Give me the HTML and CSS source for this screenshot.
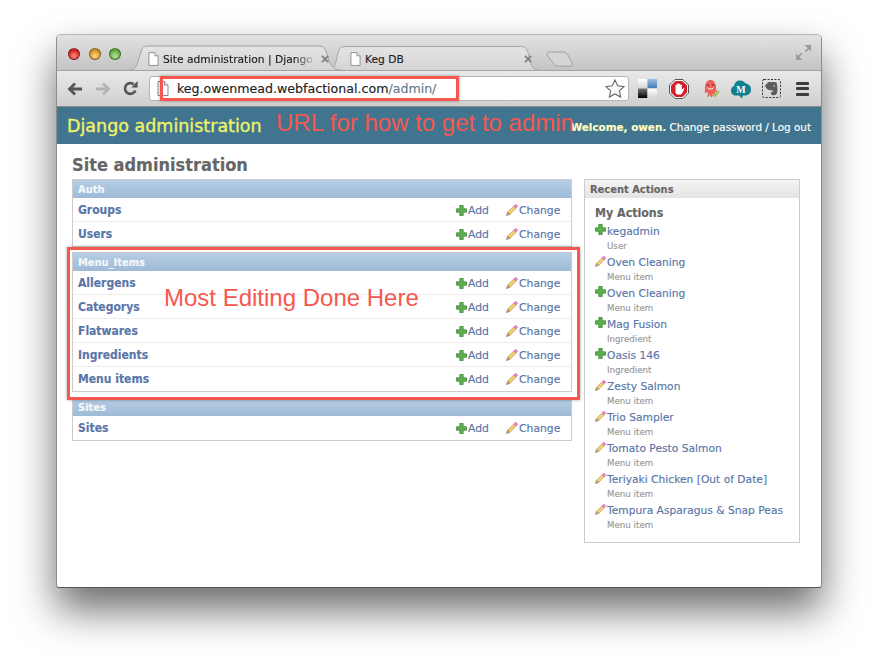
FILE: index.html
```html
<!DOCTYPE html>
<html lang="en">
<head>
<meta charset="utf-8">
<title>Site administration | Django site admin</title>
<link rel="stylesheet" href="styles.css">
</head>
<body>
<svg class="defs" width="0" height="0" aria-hidden="true">
  <symbol id="plus" viewBox="0 0 11 11">
    <path d="M3.800.5h3.400v3.300h3.300v3.400H7.200v3.300H3.800V7.200H.5V3.800h3.300z" fill="#5fae4f" stroke="#3c8a35" stroke-width=".8"/>
  </symbol>
  <symbol id="pencil" viewBox="0 0 12 12">
    <path d="M.6 11.400l1-3.100 2.100 2.100z" fill="#f2dcb0" stroke="#5b3f1a" stroke-width=".6"/>
    <path d="M1.800 8 7.600 2.200l2.200 2.200L4 10.200z" fill="#f3d272" stroke="#a9812f" stroke-width=".6"/>
    <path d="M7.700 2 9.300.4c.3-.2.600-.2.800 0l1.500 1.500c.2.200.2.500 0 .800L10 4.300z" fill="#ee7fd0" stroke="#cf62b2" stroke-width=".5"/>
  </symbol>
  <symbol id="page" viewBox="0 0 12 15">
    <path d="M1 .5h6.500L11 4v10.500H1z" fill="#fff" stroke="#8a8a8a"/>
    <path d="M7.500.5V4H11" fill="#eee" stroke="#8a8a8a"/>
  </symbol>
</svg>

<div class="window">
  <div class="tabstrip">
    <svg class="tabshapes" width="766" height="37" viewBox="0 0 766 37" aria-hidden="true">
      <defs>
        <linearGradient id="tabbg" x1="0" y1="0" x2="0" y2="1"><stop offset="0" stop-color="#e4e4e4"/><stop offset="1" stop-color="#d4d4d4"/></linearGradient>
      </defs>
      <path d="M491 19.500q0-1.500 2-1.500h14q3 0 5 3l4 8q1 3-1 3h-14q-2 0-3-2l-7-9z" fill="#d6d6d6" stroke="#a0a0a0"/>
      <path d="M272 36.500c5 0 6-3 8-9l2-9c1-4 3-6 8-6h174c5 0 7 2 8 6l3 11c1 5 4 7 14 7z" fill="url(#tabbg)" stroke="#a6a6a6"/>
      <path d="M71 36.500c7 0 9-3 11-9l3-10c1-4 3-5.500 8-5.500h170c4 0 6 2 7 5l3 10c3 7 6 9.500 16 9.500z" fill="url(#tabbg)" stroke="#a2a2a2"/>
    </svg>
    <div class="lights">
      <span class="light light-red"></span>
      <span class="light light-amber"></span>
      <span class="light light-green"></span>
    </div>
    <div class="tab tab-active">
      <svg class="tab-icon"><use href="#page"/></svg>
      <span class="tab-title">Site administration | Django</span>
      <span class="tab-close">×</span>
    </div>
    <div class="tab tab-second">
      <svg class="tab-icon"><use href="#page"/></svg>
      <span class="tab-title">Keg DB</span>
      <span class="tab-close">×</span>
    </div>
    <svg class="fullscreen" width="15" height="15" viewBox="0 0 15 15" aria-hidden="true">
      <path d="M8.500 0H15v6.500l-2.200-2.200-3 3-1.100-1.100 3-3zM6.500 15H0V8.500l2.200 2.200 3-3 1.100 1.100-3 3z" fill="#9a9a9a"/>
    </svg>
  </div>

  <div class="toolbar">
    <svg class="nav-icon" width="16" height="14" viewBox="0 0 16 14" aria-hidden="true">
      <path d="M15 7H3M8 1.500 2.500 7 8 12.500" fill="none" stroke="#555" stroke-width="2.800"/>
    </svg>
    <svg class="nav-icon" width="16" height="14" viewBox="0 0 16 14" aria-hidden="true">
      <path d="M1 7h12M8 1.500 13.500 7 8 12.500" fill="none" stroke="#b4b4b4" stroke-width="2.800"/>
    </svg>
    <svg class="nav-icon" width="15" height="15" viewBox="0 0 15 15" aria-hidden="true">
      <path d="M12.400 9.500A5.400 5.400 0 1 1 10.800 3.300" fill="none" stroke="#555" stroke-width="2.600"/>
      <path d="M8.300 6.400h6.300V0z" fill="#555"/>
    </svg>
    <div class="omnibox">
      <svg class="omni-page"><use href="#page"/></svg>
      <span class="url"><span class="url-host">keg.owenmead.webfactional.com</span><span class="url-path">/admin/</span></span>
      <svg class="star" width="20" height="19" viewBox="0 0 20 19" aria-hidden="true">
        <path d="M10 1l2.700 5.800 6.300.8-4.600 4.300 1.200 6.200L10 15l-5.600 3.100 1.200-6.200L1 7.600l6.300-.8z" fill="#fbfbfb" stroke="#666" stroke-width="1.100"/>
      </svg>
    </div>
    <div class="extensions">
      <svg class="ext ext-delicious" width="19" height="19" viewBox="0 0 19 19" aria-hidden="true">
        <defs>
          <linearGradient id="dlk" x1="0" y1="0" x2="0" y2="1"><stop offset="0" stop-color="#777"/><stop offset="1" stop-color="#000"/></linearGradient>
          <linearGradient id="dlb" x1="0" y1="0" x2="0" y2="1"><stop offset="0" stop-color="#9cc0e4"/><stop offset="1" stop-color="#3c78b8"/></linearGradient>
          <linearGradient id="dlw" x1="0" y1="0" x2="0" y2="1"><stop offset="0" stop-color="#fff"/><stop offset="1" stop-color="#d4d4d4"/></linearGradient>
        </defs>
        <rect width="9.500" height="9.500" fill="url(#dlw)"/>
        <rect x="9.500" width="9.500" height="9.500" fill="url(#dlb)"/>
        <rect y="9.500" width="9.500" height="9.500" fill="url(#dlk)"/>
        <rect x="9.500" y="9.500" width="9.500" height="9.500" fill="url(#dlw)"/>
      </svg>
      <svg class="ext ext-adblock" width="20" height="20" viewBox="0 0 20 20" aria-hidden="true">
        <path d="M6 .500h8L19.500 6v8L14 19.500H6L.500 14V6z" fill="#fff" stroke="#555"/>
        <path d="M6.600 2h6.800L18 6.600v6.800L13.400 18H6.600L2 13.400V6.600z" fill="#d3202a"/>
        <path d="M6.500 9V6.300a.8.8 0 0 1 1.600 0V5a.8.8 0 0 1 1.600 0v.6a.8.800 0 0 1 1.600 0v.8a.8.8 0 0 1 1.600 0V11l1-1.400c.7-.8 1.700 0 1.200.8L13 14.500c-.4.700-1 1-2 1H9c-1.700 0-2.500-1-2.500-2.500z" fill="#fff"/>
      </svg>
      <svg class="ext ext-octopus" width="19" height="20" viewBox="0 0 19 20" aria-hidden="true">
        <path d="M3 8.500C3 3.500 5.500 1 8.500 1S14 3.500 14 8.500c0 2 .5 3.500 1.500 4.500-1 .5-2 0-2.500-.5 0 2 .5 3.500 1 5-1.500 0-2.500-1-3-2.500-.2 1.500-.7 3-1.500 3.500C8.500 18 8 16.500 8 15c-.5 1.500-1.500 3-3 3 .5-1.500 1-3 .7-5-.7.700-2 1-3.200.3C3 12 3 10.500 3 8.500z" fill="#e8625f"/>
        <path d="M5.500 8.500c1 2 5 2 6 0" fill="none" stroke="#fff" stroke-width="1"/>
        <circle cx="6" cy="6" r=".9" fill="#8b2b2b"/><circle cx="11" cy="6" r=".9" fill="#8b2b2b"/>
        <path d="M11 14.500l2 2.500 4-5" fill="none" stroke="#9cc24a" stroke-width="2"/>
      </svg>
      <svg class="ext ext-cloud" width="20" height="20" viewBox="0 0 20 20" aria-hidden="true">
        <path d="M5 16.500C2 16.500 0 14.500 0 11.500 0 9 1.500 7.500 3 7 3.500 3.500 6 1.500 9 1.500c2.500 0 4.500 1 5.500 3 3 0 5.500 2.500 5.500 6 0 3.500-2.500 6-6 6h-2l-1 3-3-3z" fill="#14808f"/>
        <text x="10" y="13.500" class="cloud-letter" text-anchor="middle">M</text>
      </svg>
      <svg class="ext ext-evernote" width="19" height="19" viewBox="0 0 19 19" aria-hidden="true">
        <rect x=".5" y=".5" width="18" height="18" rx="1.500" fill="none" stroke="#333" stroke-dasharray="2 1.500"/>
        <path d="M3 6.500 6.500 3h6c1.500 0 2.300.7 2.500 2.200.5 3 .6 6 .2 8-.4 2-1.700 3-3.600 3-1.500 0-2.600-.6-2.600-2s1.300-2 2.600-1.600c-.3-.9-1.300-1.400-2.900-1.400C5.600 11.200 4 9.600 3 6.500z" fill="#5c5c5c"/>
        <circle cx="12.200" cy="7" r=".8" fill="#ddd"/>
      </svg>
      <span class="hamburger"><span></span><span></span><span></span></span>
    </div>
  </div>

  <div class="page">
    <header class="site-header">
      <div class="branding">Django administration</div>
      <div class="user-tools"><span class="welcome">Welcome, <strong>owen.</strong></span> <a href="#">Change password</a> / <a href="#">Log out</a></div>
    </header>

    <main class="content">
      <h1 class="page-title">Site administration</h1>
      <div class="columns">
        <div class="modules">
          <section class="module">
            <h2 class="caption">Auth</h2>
            <div class="row"><a class="row-name" href="#">Groups</a><a class="row-link" href="#"><svg class="ico"><use href="#plus"/></svg>Add</a><a class="row-link" href="#"><svg class="ico ico-pencil"><use href="#pencil"/></svg>Change</a></div>
            <div class="row"><a class="row-name" href="#">Users</a><a class="row-link" href="#"><svg class="ico"><use href="#plus"/></svg>Add</a><a class="row-link" href="#"><svg class="ico ico-pencil"><use href="#pencil"/></svg>Change</a></div>
          </section>
          <section class="module">
            <h2 class="caption">Menu_Items</h2>
            <div class="row"><a class="row-name" href="#">Allergens</a><a class="row-link" href="#"><svg class="ico"><use href="#plus"/></svg>Add</a><a class="row-link" href="#"><svg class="ico ico-pencil"><use href="#pencil"/></svg>Change</a></div>
            <div class="row"><a class="row-name" href="#">Categorys</a><a class="row-link" href="#"><svg class="ico"><use href="#plus"/></svg>Add</a><a class="row-link" href="#"><svg class="ico ico-pencil"><use href="#pencil"/></svg>Change</a></div>
            <div class="row"><a class="row-name" href="#">Flatwares</a><a class="row-link" href="#"><svg class="ico"><use href="#plus"/></svg>Add</a><a class="row-link" href="#"><svg class="ico ico-pencil"><use href="#pencil"/></svg>Change</a></div>
            <div class="row"><a class="row-name" href="#">Ingredients</a><a class="row-link" href="#"><svg class="ico"><use href="#plus"/></svg>Add</a><a class="row-link" href="#"><svg class="ico ico-pencil"><use href="#pencil"/></svg>Change</a></div>
            <div class="row"><a class="row-name" href="#">Menu items</a><a class="row-link" href="#"><svg class="ico"><use href="#plus"/></svg>Add</a><a class="row-link" href="#"><svg class="ico ico-pencil"><use href="#pencil"/></svg>Change</a></div>
          </section>
          <section class="module">
            <h2 class="caption">Sites</h2>
            <div class="row"><a class="row-name" href="#">Sites</a><a class="row-link" href="#"><svg class="ico"><use href="#plus"/></svg>Add</a><a class="row-link" href="#"><svg class="ico ico-pencil"><use href="#pencil"/></svg>Change</a></div>
          </section>
        </div>

        <aside class="recent">
          <h2 class="recent-caption">Recent Actions</h2>
          <h3 class="recent-title">My Actions</h3>
          <ul class="actions">
            <li class="action"><svg class="ico"><use href="#plus"/></svg><a href="#">kegadmin</a><span class="action-type">User</span></li>
            <li class="action"><svg class="ico ico-pencil"><use href="#pencil"/></svg><a href="#">Oven Cleaning</a><span class="action-type">Menu item</span></li>
            <li class="action"><svg class="ico"><use href="#plus"/></svg><a href="#">Oven Cleaning</a><span class="action-type">Menu item</span></li>
            <li class="action"><svg class="ico"><use href="#plus"/></svg><a href="#">Mag Fusion</a><span class="action-type">Ingredient</span></li>
            <li class="action"><svg class="ico"><use href="#plus"/></svg><a href="#">Oasis 146</a><span class="action-type">Ingredient</span></li>
            <li class="action"><svg class="ico ico-pencil"><use href="#pencil"/></svg><a href="#">Zesty Salmon</a><span class="action-type">Menu item</span></li>
            <li class="action"><svg class="ico ico-pencil"><use href="#pencil"/></svg><a href="#">Trio Sampler</a><span class="action-type">Menu item</span></li>
            <li class="action"><svg class="ico ico-pencil"><use href="#pencil"/></svg><a href="#">Tomato Pesto Salmon</a><span class="action-type">Menu item</span></li>
            <li class="action"><svg class="ico ico-pencil"><use href="#pencil"/></svg><a href="#">Teriyaki Chicken [Out of Date]</a><span class="action-type">Menu item</span></li>
            <li class="action"><svg class="ico ico-pencil"><use href="#pencil"/></svg><a href="#">Tempura Asparagus &amp; Snap Peas</a><span class="action-type">Menu item</span></li>
          </ul>
        </aside>
      </div>
    </main>
  </div>

  <div class="callout callout-url"></div>
  <div class="callout callout-menu"></div>
  <div class="note note-url">URL for how to get to admin</div>
  <div class="note note-menu">Most Editing Done Here</div>
</div>
</body>
</html>
```
FILE: styles.css
```css
* { box-sizing: border-box; }
html, body { margin: 0; height: 100%; }
body {
  background: #fff;
  padding: 34px 56px 0;
  font-family: "DejaVu Sans", Verdana, sans-serif;
  overflow: hidden;
  -webkit-text-stroke: .15px;
}
.defs { position: absolute; }
a { color: #5a76a8; text-decoration: none; }

.window {
  position: relative;
  width: 766px;
  height: 554px;
  background: #fff;
  border: 1px solid #8c8c8c;
  border-top-color: #b4b4b4;
  border-bottom-color: #555;
  border-radius: 5px 5px 3px 3px;
  box-shadow: 0 22px 40px rgba(0, 0, 0, .58);
  display: flex;
  flex-direction: column;
  overflow: hidden;
}

/* browser chrome */
.tabstrip {
  position: relative;
  height: 36px;
  flex: none;
  background: linear-gradient(#e2e2e2, #c4c4c4);
  border-bottom: 1px solid #a2a2a2;
  display: flex;
  align-items: flex-start;
}
.tabshapes { position: absolute; left: -1px; top: -1px; }
.lights { position: relative; display: flex; gap: 8.500px; padding: 13px 0 0 11px; width: 91px; flex: none; }
.light { width: 12px; height: 12px; border-radius: 50%; border: 1px solid rgba(0, 0, 0, .4); }
.light-red { background: radial-gradient(circle at 50% 70%, #ff8d85, #c8221f 70%); }
.light-amber { background: radial-gradient(circle at 50% 70%, #ffd889, #cf8c22 70%); }
.light-green { background: radial-gradient(circle at 50% 70%, #b5e79a, #5da33c 70%); }
.tab {
  position: relative;
  display: flex;
  align-items: center;
  height: 24px;
  margin-top: 12px;
  font-size: 10.700px;
  color: #222;
  flex: none;
}
.tab-active { width: 185px; }
.tab-second { width: 186px; margin-left: 17px; }
.tab-icon { width: 11px; height: 14px; flex: none; margin-right: 4px; }
.tab-title {
  flex: 1;
  white-space: nowrap;
}
.tab-active .tab-title {
  -webkit-mask-image: linear-gradient(to right, #000 85%, transparent 100%);
  mask-image: linear-gradient(to right, #000 85%, transparent 100%);
}
.tab-close { width: 16px; text-align: center; font-size: 12px; font-weight: bold; color: #7d7d7d; flex: none; }
.fullscreen { position: absolute; right: 10px; top: 10px; }

.toolbar {
  height: 36px;
  flex: none;
  background: linear-gradient(#e9e9e9, #cfcfcf);
  border-bottom: 1px solid #8d8d8d;
  display: flex;
  align-items: center;
  padding-left: 10px;
}
.nav-icon { flex: none; margin-right: 12px; }
.omnibox {
  width: 480px;
  height: 25px;
  margin-left: -1px;
  background: #fff;
  border: 1px solid #b4b4b4;
  border-radius: 3px;
  display: flex;
  align-items: center;
  padding-left: 7px;
  flex: none;
}
.omni-page { width: 12px; height: 15px; flex: none; margin-right: 8px; }
.url { flex: 1; font-size: 12.600px; white-space: nowrap; }
.url-host { color: #1c1c1c; }
.url-path { color: #66788a; }
.star { flex: none; margin-right: 3px; }
.extensions { display: flex; align-items: center; padding-left: 9px; flex: 1; }
.ext { flex: none; }
.ext-delicious { margin-right: 12px; }
.ext-adblock { margin-right: 13px; }
.ext-octopus { margin-right: 10px; }
.ext-cloud { margin-right: 11px; }
.ext-evernote { margin-right: 15px; }
.cloud-letter { font: bold 10px "Liberation Serif", serif; fill: #fff; }
.hamburger { display: flex; flex-direction: column; gap: 2.500px; width: 13px; }
.hamburger span { height: 3px; background: #3c3c3c; border-radius: 1px; }

/* django admin */
.page { flex: 1; display: flex; flex-direction: column; min-height: 0; }
.site-header {
  height: 37px;
  flex: none;
  background: #41758f;
  display: flex;
  align-items: center;
  justify-content: space-between;
  padding: 0 10px;
}
.branding { font-size: 17.500px; color: #eef26c; white-space: nowrap; -webkit-text-stroke: .35px; }
.user-tools { font-size: 10.400px; color: #fff; white-space: nowrap; padding-top: 3px; }
.user-tools a { color: #fff; }
.welcome { color: #ffffc8; font-weight: bold; }

.content { padding: 9px 21px 0 15px; }
.page-title { margin: 0 0 1px; font-family: "DejaVu Sans Condensed", "DejaVu Sans", sans-serif; font-size: 18px; line-height: 24px; font-weight: bold; color: #666; }
.columns { display: flex; align-items: flex-start; justify-content: space-between; }
.modules { width: 500px; display: flex; flex-direction: column; gap: 5px; margin-top: 1px; }
.module { border: 1px solid #ccc; }
.caption {
  margin: 0;
  height: 18px;
  padding: 1px 0 0 5px;
  font-family: "DejaVu Sans Condensed", "DejaVu Sans", sans-serif;
  font-size: 11px;
  line-height: 17px;
  font-weight: bold;
  color: #f4f7fb;
  background: linear-gradient(#b6cee5, #9ebad6);
}
.row {
  height: 24px;
  display: grid;
  grid-template-columns: 1fr 50px 65px;
  align-items: center;
  font-size: 10.800px;
  box-shadow: inset 0 -1px #eee;
}
.row:last-child { box-shadow: none; }
.row-name { padding-left: 5px; font-family: "DejaVu Sans Condensed", "DejaVu Sans", sans-serif; font-size: 12px; font-weight: bold; }
.row-link { display: flex; align-items: center; white-space: nowrap; }
.ico { width: 11px; height: 11px; flex: none; margin-right: 1px; }
.ico-pencil { width: 12px; height: 12px; }

.recent { width: 216px; height: 364px; margin-top: 1px; border: 1px solid #ccc; }
.recent-caption {
  margin: 0;
  height: 18px;
  padding: 1px 0 0 5px;
  font-family: "DejaVu Sans Condensed", "DejaVu Sans", sans-serif;
  font-size: 11px;
  line-height: 17px;
  font-weight: bold;
  color: #666;
  background: linear-gradient(#f4f4f4, #e4e4e4);
}
.recent-title { margin: 0; padding: 8px 0 0 10px; font-family: "DejaVu Sans Condensed", "DejaVu Sans", sans-serif; font-size: 12.300px; line-height: 15px; font-weight: bold; color: #666; }
.actions { list-style: none; margin: 3px 0 0; padding: 0 0 0 10px; }
.action { position: relative; height: 31px; padding-left: 12px; font-size: 10.700px; line-height: 15px; white-space: nowrap; }
.action .ico { position: absolute; left: 0; top: 0; }
.action .ico-pencil { width: 11px; height: 11px; top: 1px; }
.action-type { display: block; margin-top: 1px; font-size: 8.700px; line-height: 13px; color: #999; }

/* annotations drawn over the screenshot */
.callout { position: absolute; border: 3.500px solid #f6574f; box-shadow: 0 0 3px rgba(0, 0, 0, .35); }
.callout-url { left: 103px; top: 41px; width: 299px; height: 25px; }
.callout-menu { left: 9.500px; top: 212px; width: 513.500px; height: 153px; }
.note { position: absolute; font-family: "Liberation Sans", Arial, sans-serif; font-size: 24px; line-height: 28px; color: #f6574f; white-space: nowrap; -webkit-text-stroke: 0; }
.note-url { left: 219px; top: 74px; }
.note-menu { left: 107px; top: 249px; }
```
